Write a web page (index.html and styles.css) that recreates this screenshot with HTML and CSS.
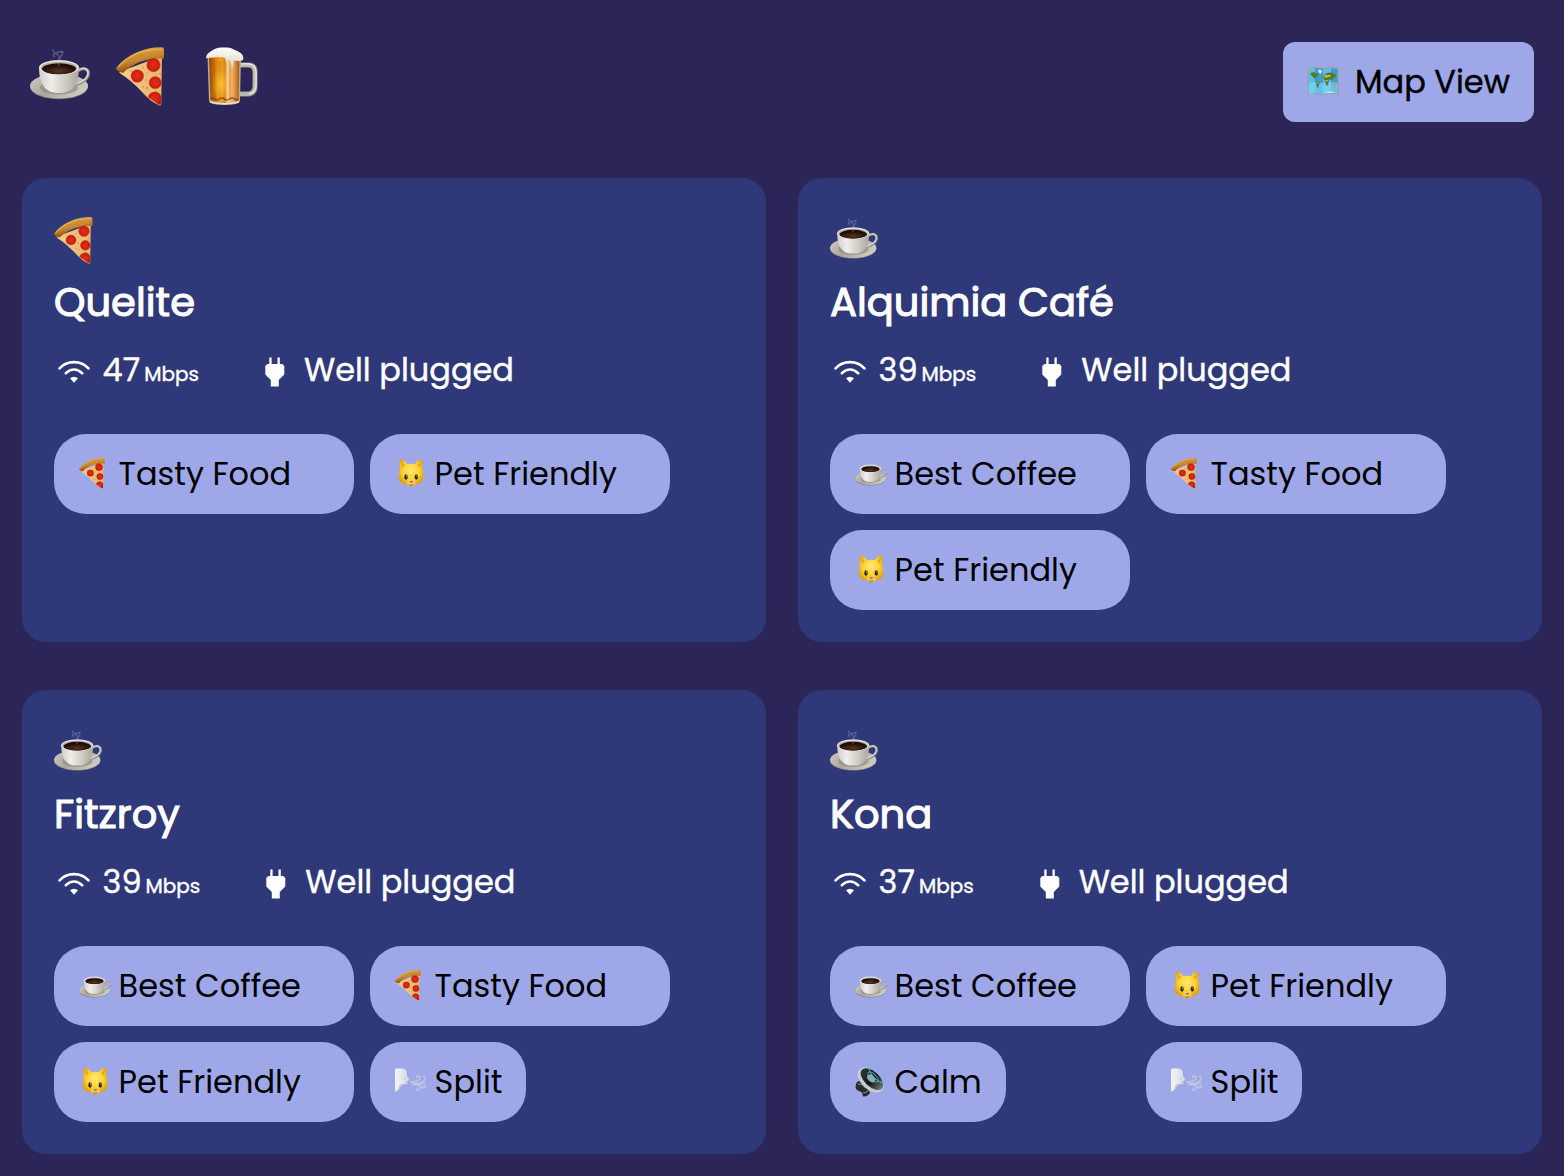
FILE: index.html
```html
<!DOCTYPE html>
<html lang="en">
<head>
<meta charset="utf-8">
<title>Places</title>
<link rel="stylesheet" href="styles.css">
</head>
<body>
<svg class="sprite" aria-hidden="true">
  <defs>
    <linearGradient id="cupBody" x1="0" x2="1"><stop offset="0" stop-color="#d0cec8"/><stop offset=".3" stop-color="#f0eeea"/><stop offset=".65" stop-color="#cfccc4"/><stop offset="1" stop-color="#aaa69c"/></linearGradient>
    <linearGradient id="saucer" x1="0" x2="1" y2=".4"><stop offset="0" stop-color="#d0cec8"/><stop offset=".5" stop-color="#aaa69c"/><stop offset="1" stop-color="#ccc9c1"/></linearGradient>
    <radialGradient id="brew" cy=".7"><stop offset="0" stop-color="#5b3520"/><stop offset="1" stop-color="#1e0d08"/></radialGradient>
    <linearGradient id="crust" x1=".2" y1=".1" x2=".5" y2=".8"><stop offset="0" stop-color="#dba043"/><stop offset=".6" stop-color="#c88730"/><stop offset="1" stop-color="#965315"/></linearGradient>
    <linearGradient id="cheese" x1="0" x2="1"><stop offset="0" stop-color="#f3cf91"/><stop offset="1" stop-color="#ebb56c"/></linearGradient>
    <radialGradient id="pep"><stop offset="0" stop-color="#e2301c"/><stop offset=".75" stop-color="#d3200f"/><stop offset="1" stop-color="#b51a0c"/></radialGradient>
    <linearGradient id="ale" x1="0" x2="1"><stop offset="0" stop-color="#8c4508"/><stop offset=".16" stop-color="#c9700f"/><stop offset=".38" stop-color="#f0a31d"/><stop offset=".53" stop-color="#d98318"/><stop offset=".6" stop-color="#fbcf95"/><stop offset=".8" stop-color="#eaa452"/><stop offset="1" stop-color="#a65b12"/></linearGradient>
    <linearGradient id="foam" y2="1" x2="0"><stop offset="0" stop-color="#fff"/><stop offset="1" stop-color="#dccfbf"/></linearGradient>
    <radialGradient id="glow"><stop offset="0" stop-color="#ffcd35" stop-opacity=".8"/><stop offset="1" stop-color="#ffc52b" stop-opacity="0"/></radialGradient>
    <radialGradient id="fur" cy=".4" r=".6"><stop offset="0" stop-color="#ffe873"/><stop offset=".6" stop-color="#fccf30"/><stop offset="1" stop-color="#d9980b"/></radialGradient>
    <linearGradient id="cone" x1="0" x2="1"><stop offset="0" stop-color="#30363a"/><stop offset=".55" stop-color="#11161a"/><stop offset="1" stop-color="#747d82"/></linearGradient>
    <linearGradient id="mist" x1="0" x2="1"><stop offset="0" stop-color="#f3f4f7"/><stop offset="1" stop-color="#d4d8e2"/></linearGradient>

    <symbol id="coffee" viewBox="0 0 60 60">
      <ellipse cx="29" cy="41" rx="29" ry="12.3" fill="#77746d"/>
      <ellipse cx="29" cy="40" rx="29" ry="12.4" fill="url(#saucer)"/>
      <ellipse cx="29" cy="41.5" rx="19" ry="7.2" fill="#8f8b82" opacity=".65"/>
      <path d="M48 25c5-4 10.500-2 10.500 2.500 0 5-6 9.500-13 11" fill="none" stroke="#8f8e8f" stroke-width="3"/>
      <path d="M48 24.500c5-4 10-2 10 2.500 0 5-6 9.500-13 11" fill="none" stroke="#d9d7d2" stroke-width="1.600"/>
      <path d="M9 21c0 14 4 21 11 24.500q9 3 18 0c7-3.500 11-10.500 11-24.500z" fill="url(#cupBody)"/>
      <ellipse cx="29" cy="21.500" rx="20" ry="7.500" fill="#e6e4df"/>
      <ellipse cx="29" cy="22" rx="18.300" ry="6.200" fill="#b5afa4"/>
      <ellipse cx="29" cy="22.800" rx="17" ry="5.500" fill="url(#brew)"/>
      <path d="M29 20c-3-6 3-7-1-11s-5-2-5-6M30 14c-2-4 5-4 1-8M25 11c-4-3 0-4 4-5s4-1 4 1" fill="none" stroke="#b7bde0" stroke-width="1.600" opacity=".3"/>
    </symbol>
    <symbol id="pizza" viewBox="0 0 60 60">
      <path d="M3 26 46 10 45.200 58q-.2 2-2.200 1.300Q35 56 27 47 16 35 5 28z" fill="url(#cheese)"/>
      <path d="M0 22C11 8 29 1 46 1.300q2 .2 2 2V12.500C31 11.500 17 17 7 27Q0 25 0 22z" fill="url(#crust)"/>
      <path d="M2 21C14 8 29 3 46 3.300" fill="none" stroke="#edbd67" stroke-width="1.500" opacity=".65"/>
      <g fill="url(#pep)" stroke="#b94a1b" stroke-width=".5"><circle cx="21.300" cy="30" r="6.300"/><circle cx="37.500" cy="19" r="6.700"/><circle cx="39.200" cy="36.700" r="6.100"/><path d="M32 51a7 7 0 0 1 13-1v8q-1 1-3 0z"/></g>
      <g fill="#c97a31"><circle cx="27" cy="22" r=".8"/><circle cx="30" cy="34" r=".8"/><circle cx="31" cy="42" r=".9"/><circle cx="44" cy="28" r=".7"/><circle cx="27" cy="41" r=".7"/><circle cx="15" cy="25" r=".7"/><circle cx="40" cy="45.500" r=".8"/><circle cx="31" cy="27" r=".6"/></g>
    </symbol>
    <symbol id="beer" viewBox="0 0 60 60">
      <path d="M37 19h9q7 0 7 7v14q0 8-8 8h-8" fill="none" stroke="#77726b" stroke-width="5.500"/>
      <path d="M37 19h9q7 0 7 7v14q0 8-8 8h-8" fill="none" stroke="#bcb8b2" stroke-width="4"/>
      <path d="M39 17.800h8q7 1 7 8v13q0 8-7 9" fill="none" stroke="#eeeae5" stroke-width="1.200"/>
      <path d="M5.500 10h33.500l-1 45q-1 4-15.500 4T7 55z" fill="#bdaa8f"/>
      <path d="M7 11h30.500l-.8 43q-2 2.500-14 2.500T8.500 54z" fill="url(#ale)"/>
      <path d="M12 14l1 39M18 15v39M28 15v39" stroke="#a65b0b" opacity=".5"/>
      <ellipse cx="19" cy="38" rx="9" ry="16" fill="url(#glow)"/>
      <path d="M8.500 53q2-2 4 0t5 0 5 0 5 0 5 0 4 0" fill="none" stroke="#713407" stroke-width="1.500" opacity=".7"/>
      <path d="M8 56q14 3.500 29 0" fill="none" stroke="#eee1cb" stroke-width="1.500"/>
      <path d="M4.500 13C3 8 8 6 11 4c4-3 9-2.500 13-2.500 5 0 7 1.500 10 3 5 2 8.500 5 7 9.500-4 2-7 0-9 1l-1 6q-1 2-2 0l-1-7-2-1-1 4-2-5c-6-2-10 0-18 0z" fill="url(#foam)"/>
    </symbol>
    <symbol id="cat" viewBox="0 0 32 32">
      <path d="M5 3.500q.5-1.500 2.500-.7 3 1.500 4.700 4.200 3.800-.7 7.600 0 1.700-2.700 4.700-4.200 2-.8 2.500.7c1 3 .5 6 .2 8.500 2 7 2 12-3 14.500q-4 .8-6.500 2.500-1.700 1.200-3.400 0Q12 27.300 8 26.500c-5-2.500-5-7.500-3.200-14.500C4.500 9.500 4 6.500 5 3.500z" fill="url(#fur)"/>
      <path d="M6.700 5.200q2 1.200 3.500 3.300L7 11zM25.500 5.200q-2 1.200-3.500 3.300l3.200 2.500z" fill="#d89516" opacity=".6"/>
      <ellipse cx="11" cy="20" rx="1.700" ry="2.800" fill="#302719"/><ellipse cx="21.300" cy="20" rx="1.700" ry="2.800" fill="#302719"/>
      <circle cx="11.500" cy="19" r=".5" fill="#fff"/><circle cx="21.800" cy="19" r=".5" fill="#fff"/>
      <ellipse cx="16.200" cy="26" rx="4.500" ry="3" fill="#f5c84d"/>
      <path d="M14.300 24h4l-2 2.300z" fill="#8c7885"/><path d="M13.800 27.800q2.400 1 4.800 0" stroke="#94610e" stroke-width=".8" fill="none"/>
      <path d="M5 26.500 2 28M7 28l-3 2M27 26.500l3 1.500M25 28l3 2" stroke="#c9b898" stroke-width=".6"/>
    </symbol>
    <symbol id="map" viewBox="0 0 32 32">
      <path d="M.3 3 8 1.800 16 3l8-1.200L31.500 3l.3 27L24 28.800 16 30l-8-1.200L.5 30z" fill="#a99d9b"/>
      <path d="M1.500 4 8 3v24.800L1.300 29zM16 4l8-1v24.800L16 29z" fill="#5dbde8"/>
      <path d="m8 3 8 1v25l-8-1.200zM24 3l6.500 1 .2 25-6.700-1.200z" fill="#3f9ccd"/>
      <path d="M2 18l6-1 8 1 8-1 6.500 1v11L24 27.800 16 29l-8-1.200L1.500 29z" fill="#7fdcf7" opacity=".6"/>
      <path d="M3 8.500q3-2 6-.5l2.500 1.500q-1 2-2.500 2.500L8 14l-2-2-2-2zM9.500 16l3.500 1.500-1.500 4-.7 2-1.500-4zM16 13l1-3 3-2 4-.5 5 2-1 3-2 1-1 2-2-1.500-1 1-1 5-1.500 1-1.500-5z" fill="#4d7b29"/>
      <path d="M17.500 10h7l-2 2-5 1zM10 17l2 .8-1 2zM18 15h3l-1 2z" fill="#d1b23c"/><ellipse cx="27.300" cy="20" rx="1.600" ry="1.400" fill="#e09632"/>
      <path d="m11 4.500 4 1-1 3-2-.5zM17 28l6-1.500 7 1" fill="#e3eff4"/>
    </symbol>
    <symbol id="speaker" viewBox="0 0 32 32">
      <path d="M2 17q5-3 11 4l2 7q-3 4-7 3.500l-1-4-5-2.500Q-1 22 2 17z" fill="#282c2e"/>
      <path d="M3 19q4-1 8 4M8 28q3 0 6-3" stroke="#8b9397" fill="none"/>
      <g transform="rotate(43 15.700 15)"><ellipse cx="15.700" cy="15" rx="15.500" ry="9.500" fill="#c8cccd"/><ellipse cx="16" cy="13.500" rx="13.800" ry="7.500" fill="url(#cone)"/><ellipse cx="15" cy="13.500" rx="4.600" ry="3.300" fill="#98a2a8"/></g>
      <g fill="none" stroke="#5fc5dc" opacity=".8"><ellipse cx="18" cy="12" rx="6.500" ry="3" transform="rotate(45 18 12)"/><ellipse cx="22.500" cy="9" rx="11" ry="5" transform="rotate(45 22.500 9)"/></g>
    </symbol>
    <symbol id="wind" viewBox="0 0 32 32">
      <path d="M0 4q7-2 11 1 1 3 1 6l2.500 4-2 .7-.2 3q-1 1-4 .5Q5 21 4 24l-4 3z" fill="url(#mist)"/>
      <path d="M11 13l-2 .8M12 17l-2 .5M4 23q1-3 4-4" stroke="#b5bac9" fill="none"/>
      <path d="M15 17q5 0 9-2 2-4-1-4-2 .3-1 2M17 18q9 1 12-2 2-4-1-5M17 19q6 0 8 2 1 4-2 4-2-.5-1-2M24 19q4-1 6 1 1 3-2 3-2-1 0-2" stroke="#c5c9dc" stroke-width="1.300" fill="none"/>
    </symbol>
    <symbol id="wifi" viewBox="0 0 32 24">
      <path d="M1.500 8.300C9 0 23 0 30.500 8.300M7.800 13.200q8.200-7.400 16.400 0" fill="none" stroke="#fff" stroke-width="2.600" stroke-linecap="round"/>
      <path d="M12 18.300q4-3.200 8 0L16 22.800z" fill="#fff"/>
    </symbol>
    <symbol id="plug" viewBox="0 0 20 30">
      <path d="M4.300.5h2.300V7h5.900V.5h2.300V7h2.500l2 2v8.500l-5.500 5.500v6.500h-8V23L.3 17.500V9l2-2h2z" fill="#fff"/>
    </symbol>
  </defs>
</svg>

<header class="topbar">
  <nav class="filters">
    <svg class="icon-lg"><use href="#coffee"/></svg>
    <svg class="icon-lg"><use href="#pizza"/></svg>
    <svg class="icon-lg"><use href="#beer"/></svg>
  </nav>
  <button class="map-button"><svg class="icon-sm"><use href="#map"/></svg>Map View</button>
</header>

<main class="grid">
  <article class="card">
    <svg class="icon-md"><use href="#pizza"/></svg>
    <h2 class="name">Quelite</h2>
    <div class="stats">
      <svg class="wifi"><use href="#wifi"/></svg><span class="speed">47</span><span class="unit">Mbps</span>
      <svg class="plug"><use href="#plug"/></svg><span>Well plugged</span>
    </div>
    <div class="chips">
      <span class="chip"><svg class="icon-sm"><use href="#pizza"/></svg>Tasty Food</span>
      <span class="chip"><svg class="icon-sm"><use href="#cat"/></svg>Pet Friendly</span>
    </div>
  </article>

  <article class="card">
    <svg class="icon-md"><use href="#coffee"/></svg>
    <h2 class="name">Alquimia Café</h2>
    <div class="stats">
      <svg class="wifi"><use href="#wifi"/></svg><span class="speed">39</span><span class="unit">Mbps</span>
      <svg class="plug"><use href="#plug"/></svg><span>Well plugged</span>
    </div>
    <div class="chips">
      <span class="chip"><svg class="icon-sm"><use href="#coffee"/></svg>Best Coffee</span>
      <span class="chip"><svg class="icon-sm"><use href="#pizza"/></svg>Tasty Food</span>
      <span class="chip"><svg class="icon-sm"><use href="#cat"/></svg>Pet Friendly</span>
    </div>
  </article>

  <article class="card">
    <svg class="icon-md"><use href="#coffee"/></svg>
    <h2 class="name">Fitzroy</h2>
    <div class="stats">
      <svg class="wifi"><use href="#wifi"/></svg><span class="speed">39</span><span class="unit">Mbps</span>
      <svg class="plug"><use href="#plug"/></svg><span>Well plugged</span>
    </div>
    <div class="chips">
      <span class="chip"><svg class="icon-sm"><use href="#coffee"/></svg>Best Coffee</span>
      <span class="chip"><svg class="icon-sm"><use href="#pizza"/></svg>Tasty Food</span>
      <span class="chip"><svg class="icon-sm"><use href="#cat"/></svg>Pet Friendly</span>
      <span class="chip split"><svg class="icon-sm"><use href="#wind"/></svg>Split</span>
    </div>
  </article>

  <article class="card">
    <svg class="icon-md"><use href="#coffee"/></svg>
    <h2 class="name">Kona</h2>
    <div class="stats">
      <svg class="wifi"><use href="#wifi"/></svg><span class="speed">37</span><span class="unit">Mbps</span>
      <svg class="plug"><use href="#plug"/></svg><span>Well plugged</span>
    </div>
    <div class="chips">
      <span class="chip"><svg class="icon-sm"><use href="#coffee"/></svg>Best Coffee</span>
      <span class="chip"><svg class="icon-sm"><use href="#cat"/></svg>Pet Friendly</span>
      <span class="chip calm"><svg class="icon-sm"><use href="#speaker"/></svg>Calm</span>
      <span class="chip split"><svg class="icon-sm"><use href="#wind"/></svg>Split</span>
    </div>
  </article>
</main>
</body>
</html>
```
FILE: styles.css
```css
* { box-sizing: border-box; }

body {
  margin: 0;
  padding: 42px 22px 22px;
  background: #2c2558;
  color: #fff;
  font-family: Poppins, Inter, sans-serif;
  font-size: 32px;
  line-height: 48px;
  white-space: nowrap;
}

svg { display: block; flex: none; }
.sprite { position: absolute; width: 0; height: 0; }

.icon-lg { width: 60px; height: 60px; }
.icon-md { width: 48px; height: 48px; }
.icon-sm { width: 32px; height: 32px; margin-bottom: 2px; }

.topbar {
  display: flex;
  justify-content: space-between;
  height: 80px;
  margin-bottom: 56px;
  padding: 0 8px;
}
.filters { display: flex; gap: 26px; padding-top: 4px; }

.map-button {
  display: flex;
  align-items: center;
  gap: 16px;
  width: 251px;
  height: 80px;
  padding: 0 0 0 24px;
  border: 0;
  border-radius: 12px;
  background: #9ea8e8;
  color: #000;
  font: inherit;
  -webkit-text-stroke: .4px #000;
}

.grid {
  display: grid;
  grid-template-columns: 1fr 1fr;
  gap: 48px 32px;
}
.card {
  height: 464px;
  padding: 38px 32px 32px;
  border-radius: 24px;
  background: #2f3878;
}

.name {
  margin: 14px 0 20px;
  font-size: 40px;
  font-weight: 400;
  -webkit-text-stroke: 1.1px #fff;
}

.stats { display: flex; align-items: center; height: 48px; -webkit-text-stroke: .4px #fff; }
.wifi { width: 32px; height: 24px; margin: 4px 12.6px 0 4px; }
.speed { margin-right: 4px; }
.unit { margin-right: 66px; padding-top: 8px; font-size: 20px; }
.plug { width: 20px; height: 30px; margin: 4px 19px 0 0; }

.chips {
  display: grid;
  grid-template-columns: 300px 300px;
  gap: 16px;
  margin-top: 40px;
}
.chip {
  display: flex;
  align-items: center;
  gap: 8px;
  height: 80px;
  padding: 0 0 0 24.6px;
  border-radius: 32px;
  background: #9ea8e8;
  color: #000;
}
.calm { width: 176px; }
.split { width: 156px; }
```
